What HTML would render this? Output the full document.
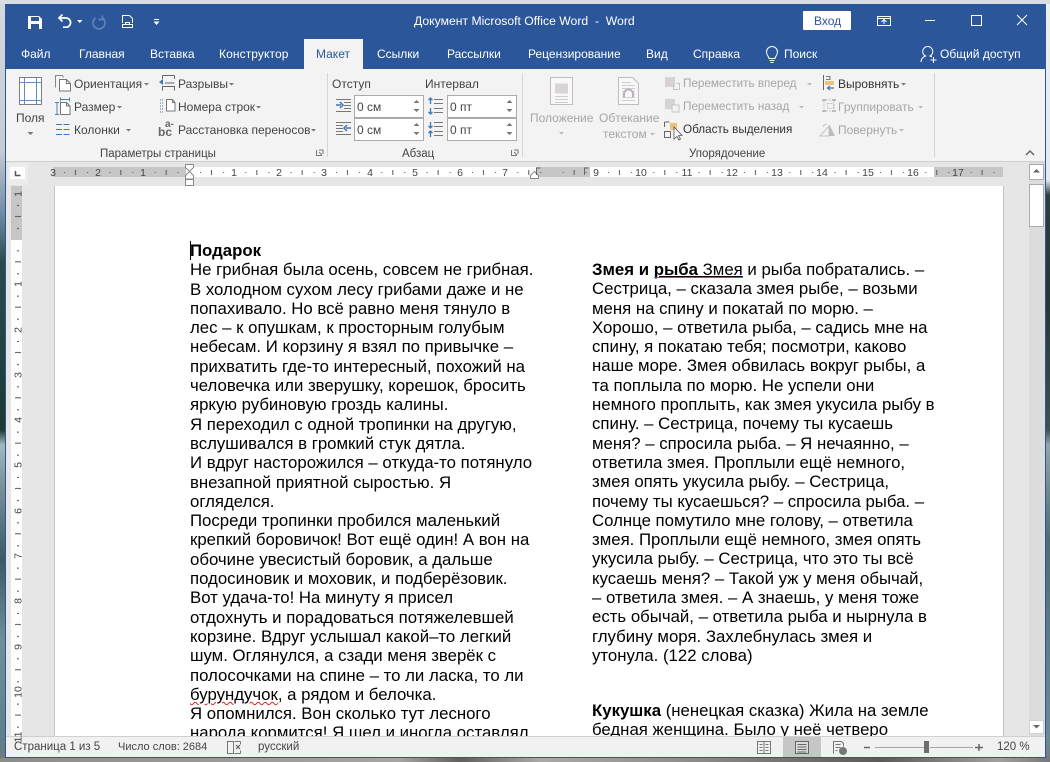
<!DOCTYPE html>
<html lang="ru"><head><meta charset="utf-8"><title>Word</title>
<style>
html,body{margin:0;padding:0}
body{width:1050px;height:762px;overflow:hidden;position:relative;background:#8a8f92;font-family:"Liberation Sans",sans-serif}
div{position:absolute}
.t{position:absolute;white-space:nowrap;font-size:12px;line-height:16px;color:#444}
.tab{color:#fff;top:46px;font-size:12px}
.g{color:#a6a6a6}
.lab{top:146px;font-size:11.5px;color:#444}
.doc{font-size:16.8px;line-height:19.3px;color:#000;white-space:nowrap}
.in{background:#fff;border:1px solid #ababab;box-sizing:border-box;height:23px;width:70px}
.st{top:739px;font-size:11.5px;color:#444}
</style></head><body>
<!-- desktop -->
<div style="left:0;top:0;width:6px;height:762px;background:linear-gradient(#d5d9dd 0,#c6ccd2 150px,#6e8aa2 215px,#2c4a4c 262px,#1c3a32 430px,#a4b8c0 445px,#7d979f 480px,#3c5a62 560px,#6f8f99 640px,#5f7f8a 740px,#77797a 762px)"></div>
<div style="left:1045px;top:0;width:5px;height:762px;background:linear-gradient(#eceef0 0,#e6e9ec 180px,#2e3f3c 195px,#25382f 300px,#3d5350 430px,#90a5ac 445px,#4f6c74 540px,#62808a 660px,#6d8a94 740px,#777 762px)"></div>
<div style="left:0;top:758px;width:1050px;height:4px;background:linear-gradient(90deg,#8c8c8c 0,#a5a5a5 400px,#5f5f5f 460px,#a9a9a9 540px,#8a8a8a 700px,#5a5a5a 880px,#a0a0a0 1000px,#777 1050px)"></div>
<div style="left:0;top:0;width:1050px;height:4px;background:#d9dce0"></div>
<!-- window -->
<div style="left:5px;top:4px;width:1041px;height:754px;background:#e6e6e6;box-sizing:border-box;border:1px solid #2b579a;overflow:hidden"></div>
<div style="left:5px;top:4px;width:1041px;height:65px;background:#2b579a"></div>
<div style="left:6px;top:69px;width:1039px;height:92px;background:#f3f3f3"></div>
<div style="left:6px;top:161px;width:1039px;height:1px;background:#cfcfcf"></div>
<div style="left:304px;top:39px;width:59px;height:30px;background:#f3f3f3"></div>
<!-- page -->
<div style="left:54px;top:186px;width:950px;height:550px;background:#fff;border-left:1px solid #c6c6c6;border-right:1px solid #c6c6c6;box-sizing:border-box;overflow:hidden"></div>
<!-- scrollbar -->
<div style="left:1029px;top:162px;width:16px;height:574px;background:#dcdcdc"></div>
<div style="left:1029px;top:164px;width:15px;height:16px;background:#fff;border:1px solid #ababab;box-sizing:border-box"></div>
<div style="left:1029px;top:184px;width:15px;height:43px;background:#fff;border:1px solid #ababab;box-sizing:border-box"></div>
<div style="left:1029px;top:720px;width:15px;height:14px;background:#fff;border:1px solid #d0d0d0;box-sizing:border-box"></div>
<!-- text clip -->
<div style="left:55px;top:186px;width:948px;height:550px;overflow:hidden">
<div class="doc" style="left:135px;top:55px"><b>Подарок</b><br>Не грибная была осень, совсем не грибная.<br>В холодном сухом лесу грибами даже и не<br>попахивало. Но всё равно меня тянуло в<br>лес – к опушкам, к просторным голубым<br>небесам. И корзину я взял по привычке –<br>прихватить где-то интересный, похожий на<br>человечка или зверушку, корешок, бросить<br>яркую рубиновую гроздь калины.<br>Я переходил с одной тропинки на другую,<br>вслушивался в громкий стук дятла.<br>И вдруг насторожился – откуда-то потянуло<br>внезапной приятной сыростью. Я<br>огляделся.<br>Посреди тропинки пробился маленький<br>крепкий боровичок! Вот ещё один! А вон на<br>обочине увесистый боровик, а дальше<br>подосиновик и моховик, и подберёзовик.<br>Вот удача-то! На минуту я присел<br>отдохнуть и порадоваться потяжелевшей<br>корзине. Вдруг услышал какой–то легкий<br>шум. Оглянулся, а сзади меня зверёк с<br>полосочками на спине – то ли ласка, то ли<br><span style="text-decoration:underline wavy #e02020 1px;text-underline-offset:1px">бурундучок</span>, а рядом и белочка.<br>Я опомнился. Вон сколько тут лесного<br>народа кормится! Я шел и иногда оставлял</div>
<div class="doc" style="left:537px;top:74px"><b>Змея и <span style="text-decoration:underline">рыба </span></b><span style="text-decoration:underline">Змея</span> и рыба побратались. –<br>Сестрица, – сказала змея рыбе, – возьми<br>меня на спину и покатай по морю. –<br>Хорошо, – ответила рыба, – садись мне на<br>спину, я покатаю тебя; посмотри, каково<br>наше море. Змея обвилась вокруг рыбы, а<br>та поплыла по морю. Не успели они<br>немного проплыть, как змея укусила рыбу в<br>спину. – Сестрица, почему ты кусаешь<br>меня? – спросила рыба. – Я нечаянно, –<br>ответила змея. Проплыли ещё немного,<br>змея опять укусила рыбу. – Сестрица,<br>почему ты кусаешься? – спросила рыба. –<br>Солнце помутило мне голову, – ответила<br>змея. Проплыли ещё немного, змея опять<br>укусила рыбу. – Сестрица, что это ты всё<br>кусаешь меня? – Такой уж у меня обычай,<br>– ответила змея. – А знаешь, у меня тоже<br>есть обычай, – ответила рыба и нырнула в<br>глубину моря. Захлебнулась змея и<br>утонула. (122 слова)</div>
<div class="doc" style="left:537px;top:515px"><b>Кукушка</b> (ненецкая сказка) Жила на земле<br>бедная женщина. Было у неё четверо</div>
<div style="left:599px;top:91px;width:89px;height:1px;background:#3a6fd8"></div>
<div style="left:135px;top:55px;width:1px;height:19px;background:#000"></div>
</div>
<!-- status bar -->
<div style="left:6px;top:736px;width:1039px;height:21px;background:#f1f1f1;border-top:1px solid #d0d0d0;box-sizing:border-box"></div>
<div style="left:783px;top:737px;width:38px;height:20px;background:#c6c6c6"></div>
<!-- ruler backgrounds -->
<div style="left:53px;top:167px;width:950px;height:10px;background:#c6c6c6"></div>
<div style="left:186px;top:167px;width:350px;height:10px;background:#fff"></div>
<div style="left:590px;top:167px;width:344px;height:10px;background:#fff"></div>
<div style="left:11px;top:186px;width:11px;height:550px;background:#fff"></div>
<div style="left:11px;top:186px;width:11px;height:54px;background:#c6c6c6"></div>
<div style="left:8px;top:163px;width:20px;height:22px;background:#ececec"></div>
<div style="left:10px;top:167px;width:15px;height:12px;background:#fff"></div>

<svg width="1050" height="762" viewBox="0 0 1050 762" style="position:absolute;left:0;top:0" font-family="Liberation Sans, sans-serif">
<defs>
<pattern id="hp" patternUnits="userSpaceOnUse" x="53" y="0" width="45.33" height="762">
<rect x="11" y="172" width="1" height="1" fill="#555"/><rect x="22" y="170" width="1" height="5" fill="#555"/><rect x="34" y="172" width="1" height="1" fill="#555"/></pattern>
<pattern id="vp" patternUnits="userSpaceOnUse" x="0" y="194" width="1050" height="45.33">
<rect x="17" y="11" width="2" height="1" fill="#555"/><rect x="15" y="22" width="6" height="1" fill="#555"/><rect x="17" y="34" width="2" height="1" fill="#555"/></pattern>
</defs>
<!-- rulers -->
<rect x="53" y="168" width="950" height="8" fill="url(#hp)"/>
<rect x="11" y="190" width="11" height="546" fill="url(#vp)"/>
<g font-size="10.5" fill="#444" text-anchor="middle">
<text x="53" y="176">3</text><text x="98" y="176">2</text><text x="143" y="176">1</text><text x="234" y="176">1</text><text x="279" y="176">2</text><text x="324" y="176">3</text><text x="370" y="176">4</text><text x="415" y="176">5</text><text x="460" y="176">6</text><text x="505" y="176">7</text><text x="596" y="176">9</text><text x="641" y="176">10</text><text x="687" y="176">11</text><text x="732" y="176">12</text><text x="777" y="176">13</text><text x="822" y="176">14</text><text x="868" y="176">15</text><text x="913" y="176">16</text><text x="958" y="176">17</text>
<text transform="translate(21.5 194) rotate(-90)">1</text><text transform="translate(21.5 284) rotate(-90)">1</text><text transform="translate(21.5 330) rotate(-90)">2</text><text transform="translate(21.5 375) rotate(-90)">3</text><text transform="translate(21.5 420) rotate(-90)">4</text><text transform="translate(21.5 465) rotate(-90)">5</text><text transform="translate(21.5 511) rotate(-90)">6</text><text transform="translate(21.5 556) rotate(-90)">7</text><text transform="translate(21.5 601) rotate(-90)">8</text><text transform="translate(21.5 647) rotate(-90)">9</text><text transform="translate(21.5 692) rotate(-90)">10</text><text transform="translate(21.5 737) rotate(-90)">11</text>
</g>
<!-- indent markers -->
<path d="M185.5 164.5h8v3l-4 4 4 4v3.5h-8v-3.5l4-4-4-4zM185.5 179.5h8v6h-8z" fill="#fff" stroke="#888"/>
<path d="M530.5 178.5v-3l4-4 4 4v3z" fill="#fff" stroke="#888"/>
<path d="M536.5 175v-7h4M584.5 175v-7h4" fill="none" stroke="#666"/>
<path d="M15.5 171v4.5h5" fill="none" stroke="#555" stroke-width="1.5"/>
<!-- QAT -->
<path d="M28 16h11l3 3v10H28z" fill="#fff"/><path d="M31 17h8v4h-8zM31 24h8v5h-8z" fill="#2b579a"/>
<path d="M59 18h7a4.6 4.6 0 0 1 0 9.200h-3M62.500 14.500L59 18l3.500 3.500" fill="none" stroke="#fff" stroke-width="1.700"/>
<path d="M77 20h5.500l-2.750 3z" fill="#fff"/>
<path d="M102.500 18a6 6 0 1 1-7 0M102.500 15.500v4h-4" fill="none" stroke="#5f82b8" stroke-width="1.700"/>
<path d="M122.500 23v-7.500h7l3 3v4.500M132.500 24.500h-10v3h10zM125.500 22.500h4v2h-4z" fill="none" stroke="#fff"/>
<path d="M154 19h5v1h-5zM153.500 21.500h6l-3 3.500z" fill="#fff"/>
<!-- title buttons -->
<rect x="803" y="11" width="48" height="19" fill="#fff" rx="1"/>
<path d="M877.500 16.500h13v9h-13zM877.500 18.500h13M884 24v-4M881.500 22l2.500-2.500 2.500 2.500" fill="none" stroke="#fff"/>
<path d="M925 20.500h10M971.500 15.500h10v10h-10zM1017 15l10 10M1027 15l-10 10" fill="none" stroke="#fff"/>
<!-- search bulb, person -->
<path d="M769 58.500c0-2-2.500-3-2.500-6.500a5.500 5.500 0 0 1 11 0c0 3.500-2.500 4.500-2.500 6.500zM769.500 60.500h5M770.500 62.500h3" fill="none" stroke="#fff"/>
<path d="M921 62c0-3.500 2-5 4.500-6a5 5 0 1 1 4.500 0l2 1M933.500 57v6M930.500 60h6" fill="none" stroke="#fff"/>
<!-- Поля -->
<path d="M19.500 77.500h22v27h-22z" fill="#fff" stroke="#7f7f7f"/>
<path d="M19.500 82.500h22M19.500 100.500h22M24.500 77.500v27M36.500 77.500v27" fill="none" stroke="#5b8ec8"/>
<path d="M27.500 132h6l-3 3z" fill="#777"/>
<!-- Ориентация -->
<path d="M55.500 87.500v-12h7l1 2" fill="none" stroke="#888"/>
<path d="M59.500 79.500h7l4 4v7.500h-11zM66.500 79.500v4h4" fill="#fff" stroke="#777"/>
<!-- Размер -->
<path d="M60 99.500h10M60.500 97.500v4M69.500 97.500v4M57 102.500v11.500M55 102.500h4M55 114.500h4" fill="none" stroke="#4d82bd"/>
<path d="M60.500 102.500h6l3.500 3.500v8.500h-9.500zM66.500 102.500v3.500h3.500" fill="#fff" stroke="#777"/>
<!-- Колонки -->
<path d="M56 124.500h6M56 129.500h6M56 134.500h6M63.500 124.500h6M63.500 129.500h6M63.500 134.500h6" stroke="#3e78b8" fill="none"/>
<!-- Разрывы -->
<path d="M162.500 75.500h12M162.500 79v-3.500M174.500 79v-3.500M162.500 90.500v-4h12v4M165 83h9.500" fill="none" stroke="#666"/>
<path d="M159 82l4-3v6z" fill="#3e78b8"/>
<!-- Номера строк -->
<path d="M160 100h3M160 103h3M160 106h3M160 109h3M160 112h3" stroke="#3e78b8" stroke-dasharray="1 1" fill="none"/>
<path d="M166.500 99.500h6l2.500 3v8.500h-8.500zM172.500 99.500v3h2.500" fill="#fff" stroke="#777"/>
<!-- Расстановка -->
<text x="158" y="136" font-size="12" fill="#666" font-weight="bold">bc</text><text x="165" y="127" font-size="10" fill="#666" font-weight="bold">a-</text>
<!-- arrows -->
<g fill="#777"><path d="M144 83h5l-2.500 2.500zM117 106h5l-2.500 2.500zM126 129h5l-2.500 2.500zM229 83h5l-2.500 2.500zM256 106h5l-2.500 2.500zM311 129h5l-2.500 2.500zM901 83h5l-2.500 2.500z"/></g>
<g fill="#b9b9b9"><path d="M807 83h5l-2.500 2.500zM799 106h5l-2.500 2.500zM918 106h5l-2.500 2.500zM899 129h5l-2.500 2.500zM559 132h5l-2.500 2.500zM650 133h5l-2.500 2.500z"/></g>
<!-- separators -->
<path d="M327.500 73v84M522.500 73v84M934.500 73v84" stroke="#d4d4d4"/>
<!-- launchers -->
<path d="M316.500 150v5.500h5.500M319 150h4v4M319 152l3 3M511.500 150v5.500h5.500M514 150h4v4M514 152l3 3" fill="none" stroke="#777"/>
<path d="M1026 155l4-4 4 4" fill="none" stroke="#666" stroke-width="1.500"/>
<!-- Indent icons -->
<path d="M336 99.500h15M344 102.500h7M344 105.500h7M344 108.500h7M336 111.500h15" stroke="#777" fill="none"/>
<path d="M336 105h5M340 102l3 3-3 3" stroke="#3e78b8" fill="none" stroke-width="1.500"/>
<path d="M336 122.500h15M336 125.500h7M336 128.500h7M336 131.500h7M336 134.500h15" stroke="#777" fill="none"/>
<path d="M351 128h-5M347 125l-3 3 3 3" stroke="#3e78b8" fill="none" stroke-width="1.500"/>
<!-- Spacing icons -->
<path d="M434 99.500h9M434 103.500h9M434 108.500h9M434 112.500h9M434 122.500h9M434 126.500h9M434 131.500h9M434 135.500h9" stroke="#777" fill="none"/>
<path d="M430.500 104v-6M428.500 100l2 -2 2 2M430.500 108v6M428.500 112l2 2 2-2M430.500 122v6M428.500 126l2 2 2-2M430.500 137v-6M428.500 133l2-2 2 2" stroke="#3e78b8" fill="none" stroke-width="1.300"/>
<!-- Position icons -->
<path d="M550.500 77.500h22v27h-22z" fill="#f8f8f8" stroke="#c4bcc4"/>
<path d="M555 83.500h13v10h-13z" fill="#d8d4d8"/>
<path d="M555 96.500h13M555 99.500h13M555 102.500h13" stroke="#cfcfcf"/>
<path d="M618.500 77.500h14l6 6v21h-20z" fill="#f8f8f8" stroke="#c4bcc4"/>
<path d="M622 82.500h9M622 85.500h13M622 88.500h13M622 91.500h3M632 91.500h3M622 94.500h3M632 94.500h3M622 97.500h13M622 100.500h13" stroke="#cfcfcf"/>
<path d="M624 97v-3a4.500 4.500 0 0 1 9 0v3" fill="none" stroke="#b9b3b9" stroke-width="2"/>
<!-- Move forward -->
<rect x="665" y="77" width="10" height="10" fill="#d6d2d6"/><path d="M673.500 84.500v5h6v-6h-3" fill="none" stroke="#c4c4c4"/>
<rect x="665" y="99" width="10" height="10" fill="#d6d2d6"/><rect x="672" y="105" width="7" height="7" fill="#f3f3f3" stroke="#c4c4c4"/>
<!-- Selection pane -->
<path d="M664.500 122h5M664.500 122v5M664.500 131.500h6v6h-6z" fill="none" stroke="#666"/>
<rect x="670" y="123" width="7" height="7" fill="#efc27a"/>
<path d="M674 127v12l3-2.500 2 3.500 1.500-1-2-3.500h3.500z" fill="#fff" stroke="#555" stroke-width=".8"/>
<!-- Align -->
<path d="M823.500 75v15" stroke="#666"/>
<path d="M826 76.500h4v3h-4" fill="none" stroke="#777"/>
<rect x="825" y="81" width="9" height="4" fill="#efc27a"/>
<path d="M834 88h-6M830 86l-2.500 2 2.500 2" fill="none" stroke="#3e78b8" stroke-width="1.200"/>
<!-- Group -->
<path d="M822 101h4v-2h-4zM832 101h4v-2h-4zM822 112h4v-2h-4zM832 112h4v-2h-4z" fill="#bcbcbc"/>
<path d="M824 101v9M834 101v9M826 100h6M826 111h6M827.500 103.500h6v5h-6z" fill="none" stroke="#c4c4c4" stroke-dasharray="2 1"/>
<!-- Rotate -->
<path d="M820 136l9-10v10z" fill="none" stroke="#c4c4c4"/><path d="M829 124l6 12h-6z" fill="#bcbcbc"/>
<path d="M823 127a5 5 0 0 1 4-3" stroke="#c4c4c4" fill="none"/>
<!-- status icons -->
<path d="M227.500 741.500h6v12h-6zM234.500 741.500h6M234.500 753.500h6M240.500 741.500v3M240.500 750.500v3" fill="none" stroke="#777"/>
<path d="M236 745l4 4M240 745l-4 4" stroke="#555" fill="none"/>
<path d="M757.500 741.500h13v12h-13zM764 741.500v12M759.500 744.500h3M759.500 747.500h3M759.500 750.500h3M765.500 744.500h3M765.500 747.500h3M765.500 750.500h3" fill="none" stroke="#777"/>
<path d="M795.500 741.500h13v12h-13zM797.500 744.500h9M797.500 747h9M797.500 749.500h9M797.500 752h9" fill="#dcdcdc" stroke="#666"/>
<path d="M833.500 753.500v-12h8l2 2v3M835.500 744.500h5M835.500 747.500h5M835.500 750.500h2" fill="none" stroke="#777"/><circle cx="843" cy="751" r="4" fill="#777"/>
<path d="M864 747.500h6M975 747.500h8M979 744v7" stroke="#666" fill="none" stroke-width="1.500"/>
<path d="M875 747.500h49M930 747.500h43" stroke="#a6a6a6"/>
<rect x="924" y="741" width="5" height="12" fill="#6e6e6e"/>
</svg>

<!-- Title and tabs -->
<div class="t" style="left:414px;top:13px;color:#fff;font-size:12.2px">Документ Microsoft Office Word&nbsp; - &nbsp;Word</div>
<div class="t" style="left:814px;top:13px;color:#2b579a">Вход</div>
<div class="t tab" style="left:21px">Файл</div>
<div class="t tab" style="left:79px">Главная</div>
<div class="t tab" style="left:150px">Вставка</div>
<div class="t tab" style="left:219px;letter-spacing:.1px">Конструктор</div>
<div class="t tab" style="left:316px;color:#2b579a">Макет</div>
<div class="t tab" style="left:377px">Ссылки</div>
<div class="t tab" style="left:447px">Рассылки</div>
<div class="t tab" style="left:528px">Рецензирование</div>
<div class="t tab" style="left:646px">Вид</div>
<div class="t tab" style="left:693px">Справка</div>
<div class="t tab" style="left:784px">Поиск</div>
<div class="t tab" style="left:940px">Общий доступ</div>
<!-- Ribbon text -->
<div class="t" style="left:16px;top:110px">Поля</div>
<div class="t" style="left:74px;top:76px">Ориентация</div>
<div class="t" style="left:74px;top:99px">Размер</div>
<div class="t" style="left:74px;top:122px">Колонки</div>
<div class="t" style="left:178px;top:76px">Разрывы</div>
<div class="t" style="left:178px;top:99px">Номера строк</div>
<div class="t" style="left:178px;top:122px">Расстановка переносов</div>
<div class="t lab" style="left:100px">Параметры страницы</div>
<div class="t" style="left:332px;top:76px">Отступ</div>
<div class="t" style="left:425px;top:76px">Интервал</div>
<div class="in" style="left:354px;top:95px"></div><div class="in" style="left:354px;top:118px"></div>
<div class="in" style="left:447px;top:95px"></div><div class="in" style="left:447px;top:118px"></div>
<div class="t" style="left:357px;top:99px">0 см</div>
<div class="t" style="left:357px;top:122px">0 см</div>
<div class="t" style="left:450px;top:99px">0 пт</div>
<div class="t" style="left:450px;top:122px">0 пт</div>
<svg width="1050" height="762" viewBox="0 0 1050 762" style="position:absolute;left:0;top:0">
<path d="M413.500 103l3-3 3 3zM413.500 109l3 3 3-3zM413.500 126l3-3 3 3zM413.500 132l3 3 3-3zM506.500 103l3-3 3 3zM506.500 109l3 3 3-3zM506.500 126l3-3 3 3zM506.500 132l3 3 3-3z" fill="#777"/>
<path d="M1033 172.500l3.500-3.500 3.500 3.500zM1033 725l3.500 3.500 3.500-3.500z" fill="#666"/>
</svg>
<div class="t lab" style="left:402px">Абзац</div>
<div class="t g" style="left:530px;top:110px">Положение</div>
<div class="t g" style="left:599px;top:110px">Обтекание</div>
<div class="t g" style="left:603px;top:126px">текстом</div>
<div class="t g" style="left:683px;top:76px;font-size:11.7px">Переместить вперед</div>
<div class="t g" style="left:683px;top:99px;font-size:11.7px">Переместить назад</div>
<div class="t" style="left:683px;top:122px;color:#333;font-size:11.7px">Область выделения</div>
<div class="t" style="left:838px;top:76px;color:#333">Выровнять</div>
<div class="t g" style="left:838px;top:99px">Группировать</div>
<div class="t g" style="left:838px;top:122px">Повернуть</div>
<div class="t lab" style="left:689px">Упорядочение</div>
<!-- Status text -->
<div class="t st" style="left:14px">Страница 1 из 5</div>
<div class="t st" style="left:118px;font-size:11px">Число слов: 2684</div>
<div class="t st" style="left:258px">русский</div>
<div class="t st" style="left:997px">120 %</div>
</body></html>
